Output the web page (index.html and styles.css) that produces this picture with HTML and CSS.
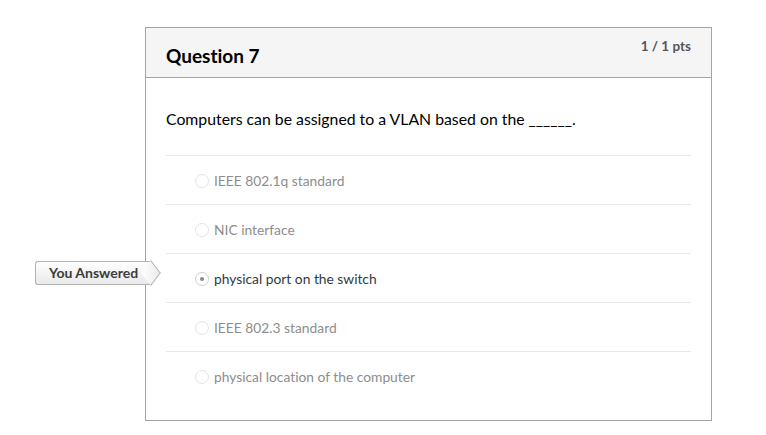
FILE: index.html
```html
<!DOCTYPE html>
<html>
<head>
<meta charset="utf-8">
<link rel="stylesheet" href="styles.css">
</head>
<body>
<div class="card">
  <div class="header">
    <h2 class="title">Question 7</h2>
    <div class="pts">1 / 1 pts</div>
  </div>
  <div class="body">
    <p class="qtext">Computers can be assigned to a VLAN based on the ______.</p>
    <div class="answers">
      <div class="answer"><span class="radio"></span><span class="label">IEEE 802.1q standard</span></div>
      <div class="answer"><span class="radio"></span><span class="label">NIC interface</span></div>
      <div class="answer selected">
        <div class="tag">You Answered</div>
        <span class="radio"><span class="dot"></span></span><span class="label">physical port on the switch</span>
      </div>
      <div class="answer"><span class="radio"></span><span class="label">IEEE 802.3 standard</span></div>
      <div class="answer"><span class="radio"></span><span class="label">physical location of the computer</span></div>
    </div>
  </div>
</div>
</body>
</html>
```
FILE: styles.css
```css
html, body { margin: 0; padding: 0; background: #fff; }
body {
  font-family: Lato, "Open Sans", sans-serif;
  color: #2d3b45;
  font-variant-ligatures: none;
}
.card {
  margin: 27px 0 0 145px;
  width: 565px;
  height: 392px;
  border: 1px solid #a5a5a5;
  box-sizing: content-box;
}
.header {
  height: 49px;
  background: #f5f5f5;
  border-bottom: 1px solid #a5a5a5;
  display: flex;
  justify-content: space-between;
  padding: 0 20px;
}
.title {
  margin: 0;
  font-size: 19px;
  font-weight: 700;
  line-height: 22px;
  padding-top: 17px;
  color: #000;
}
.pts {
  font-size: 13.5px;
  font-weight: 700;
  color: #565656;
  padding-top: 10px;
  line-height: 16px;
}
.body { padding: 0 20px; }
.qtext {
  margin: 0;
  padding-top: 31px;
  height: 46px;
  font-size: 15.8px;
  line-height: 20px;
  color: #000;
}
.answer {
  position: relative;
  height: 47px;
  border-top: 1px solid #e8e8e8;
  display: flex;
  align-items: center;
  padding-left: 29px;
  padding-top: 1px;
  box-sizing: content-box;
}
.radio {
  width: 12px;
  height: 12px;
  border: 1px solid #e3e3e3;
  border-radius: 50%;
  margin-right: 5px;
  display: flex;
  align-items: center;
  justify-content: center;
  box-sizing: content-box;
  flex: none;
}
.dot {
  width: 4px;
  height: 4px;
  border-radius: 50%;
  background: #8a8a8a;
}
.label {
  font-size: 13.8px;
  color: #8d8d8d;
  line-height: 16px;
}
.selected .label { color: #2d3b45; }
.selected .radio { border-color: #cfcfcf; }
.tag {
  position: absolute;
  left: -131px;
  top: 7px;
  width: 115px;
  height: 24px;
  box-sizing: border-box;
  border: 1px solid #b3b3b3;
  border-right: none;
  border-radius: 3px 0 0 3px;
  background: linear-gradient(#ffffff, #e9e9e9);
  font-size: 14px;
  font-weight: 700;
  color: #3c3c3c;
  line-height: 22px;
  padding-left: 13px;
}
.tag::after {
  content: "";
  position: absolute;
  right: -9px;
  top: 3px;
  width: 16px;
  height: 16px;
  border-top: 1px solid #b3b3b3;
  border-right: 1px solid #b3b3b3;
  transform: rotate(45deg) skew(8deg, 8deg);
  background: linear-gradient(45deg, #ffffff, #ebebeb);
  box-sizing: border-box;
}
```
